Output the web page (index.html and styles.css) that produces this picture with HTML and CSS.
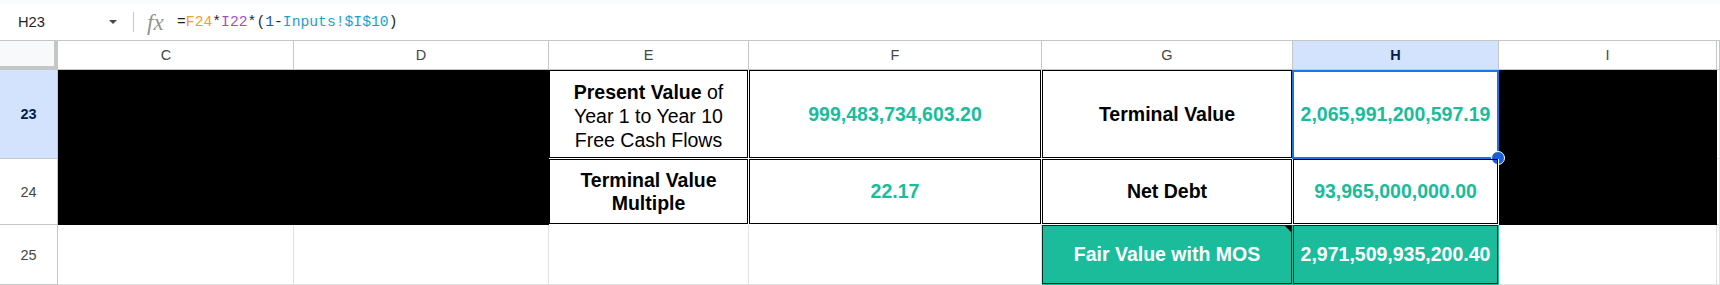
FILE: index.html
```html
<!DOCTYPE html>
<html lang="en">
<head>
    <meta charset="UTF-8">
    <meta name="viewport" content="width=device-width, initial-scale=1.0">
    <title>DCF - Fair Value</title>
    <link rel="stylesheet" href="styles.css">
</head>
<body>
    <div class="top-strip"></div>
    <!-- 公式栏 -->
    <div class="formula-bar">
        <div class="name-box">
            <span class="cell-ref">H23</span>
            <span class="caret"></span>
        </div>
        <div class="divider"></div>
        <span class="fx">fx</span>
        <div class="formula">=<span class="ref-a">F24</span>*<span class="ref-b">I22</span>*(<span class="num">1</span>-<span class="ref-c">Inputs!$I$10</span>)</div>
    </div>

    <!-- 表格区域 -->
    <div class="grid">
        <div class="corner"></div>
        <div class="col-head col-c">C</div>
        <div class="col-head">D</div>
        <div class="col-head">E</div>
        <div class="col-head">F</div>
        <div class="col-head">G</div>
        <div class="col-head active">H</div>
        <div class="col-head">I</div>
        <div class="col-head"></div>

        <!-- row 23 -->
        <div class="row-head active">23</div>
        <div class="black-block left-block"></div>
        <div class="cell box label tall">
            <span><b>Present Value</b> of<br>Year 1 to Year 10<br>Free Cash Flows</span>
        </div>
        <div class="cell box value">999,483,734,603.20</div>
        <div class="cell box label bold">Terminal Value</div>
        <div class="cell box value selected">
            <span>2,065,991,200,597.19</span>
            <div class="selection"><div class="handle"></div></div>
        </div>
        <div class="black-block right-block"></div>
        <div class="cell"></div>

        <!-- row 24 -->
        <div class="row-head">24</div>
        <div class="cell box label bold"><span>Terminal Value<br>Multiple</span></div>
        <div class="cell box value">22.17</div>
        <div class="cell box label bold">Net Debt</div>
        <div class="cell box value">93,965,000,000.00</div>
        <div class="cell"></div>

        <!-- row 25 -->
        <div class="row-head">25</div>
        <div class="cell"></div>
        <div class="cell"></div>
        <div class="cell"></div>
        <div class="cell"></div>
        <div class="cell box fill">
            Fair Value with MOS
            <span class="note"></span>
        </div>
        <div class="cell box fill">2,971,509,935,200.40</div>
        <div class="cell"></div>
        <div class="cell"></div>
    </div>
</body>
</html>
```

FILE: styles.css
```css
* {
    margin: 0;
    padding: 0;
    box-sizing: border-box;
}

html,
body {
    width: 100%;
    height: 100%;
}

body {
    font-family: "Liberation Sans", Arial, sans-serif;
    background: #fff;
    overflow: hidden;
}

.top-strip {
    height: 4px;
    background: #f9fbfd;
}

/* 公式栏 */
.formula-bar {
    height: 36px;
    display: flex;
    align-items: center;
}

.name-box {
    width: 133px;
    height: 100%;
    display: flex;
    align-items: center;
    padding-left: 18px;
    padding-right: 16px;
}

.cell-ref {
    font-size: 14.7px;
    color: #1f1f1f;
}

.caret {
    margin-left: auto;
    width: 0;
    height: 0;
    border-left: 4.5px solid transparent;
    border-right: 4.5px solid transparent;
    border-top: 4.5px solid #444746;
}

.divider {
    width: 1px;
    height: 20px;
    background: #c4c7c5;
}

.fx {
    width: 30px;
    margin-left: 13px;
    font-family: "Liberation Serif", serif;
    font-style: italic;
    font-size: 23px;
    color: #939393;
    line-height: 1;
}

.formula {
    font-family: "Liberation Mono", monospace;
    font-size: 14.7px;
    color: #1f1f1f;
}

.ref-a { color: #f59d2a; }
.ref-b { color: #9c4ec3; }
.num { color: #2152b8; }
.ref-c { color: #16a2cf; }

/* 网格 */
.grid {
    display: grid;
    grid-template-columns: 58px 236px 255px 200px 293px 251px 206px 218px 1fr;
    grid-template-rows: 29px 89px 66px 60px;
    border-top: 1px solid #c4c7c5;
}

.corner {
    background: #f8f9fa;
    border-right: 4px solid #c4c7c5;
    border-bottom: 4px solid #c4c7c5;
}

.col-head {
    display: flex;
    align-items: center;
    justify-content: center;
    font-size: 14.5px;
    color: #444746;
    border-right: 1px solid #c4c7c5;
    border-bottom: 1px solid #c4c7c5;
}

/* C列被冻结列挡住了一部分 */
.col-c {
    padding-right: 19px;
}

.col-head.active,
.row-head.active {
    background: #d3e3fd;
    color: #041e49;
    font-weight: bold;
}

.row-head {
    display: flex;
    align-items: center;
    justify-content: center;
    font-size: 14.5px;
    color: #444746;
    border-right: 1px solid #c4c7c5;
    border-bottom: 1px solid #c4c7c5;
}

.black-block {
    background: #000;
    grid-row: 2 / 4;
}

.left-block {
    grid-column: 2 / 4;
}

.right-block {
    grid-column: 8;
}

.cell {
    position: relative;
    display: flex;
    align-items: center;
    justify-content: center;
    text-align: center;
    font-size: 19.5px;
    line-height: 23px;
    white-space: nowrap;
    border-right: 1px solid #e2e2e3;
    border-bottom: 1px solid #e2e2e3;
}

.tall {
    line-height: 24px;
    padding-top: 3px;
}

/* 双线边框 */
.box {
    border-right-color: #fff;
    border-bottom-color: #fff;
    box-shadow: inset 0 0 0 1px #000;
    color: #000;
}

.bold {
    font-weight: bold;
}

.value {
    font-weight: bold;
    color: #1abc9c;
}

.fill {
    background: #1abc9c;
    border-right-color: #1abc9c;
    border-bottom-color: #1abc9c;
    box-shadow: inset 0 0 0 1px #0b2a24;
    color: #fff;
    font-weight: bold;
}

.note {
    position: absolute;
    top: 1px;
    right: 1px;
    width: 0;
    height: 0;
    border-left: 6px solid transparent;
    border-top: 6px solid #000;
}

.selection {
    position: absolute;
    top: 0;
    left: -1px;
    right: -1px;
    bottom: -1px;
    border: 2px solid #1a73e8;
    pointer-events: none;
}

.handle {
    position: absolute;
    right: -8px;
    bottom: -8px;
    width: 14px;
    height: 14px;
    border-radius: 50%;
    background: #1a5fd6;
    border: 1px solid #fff;
}
```
